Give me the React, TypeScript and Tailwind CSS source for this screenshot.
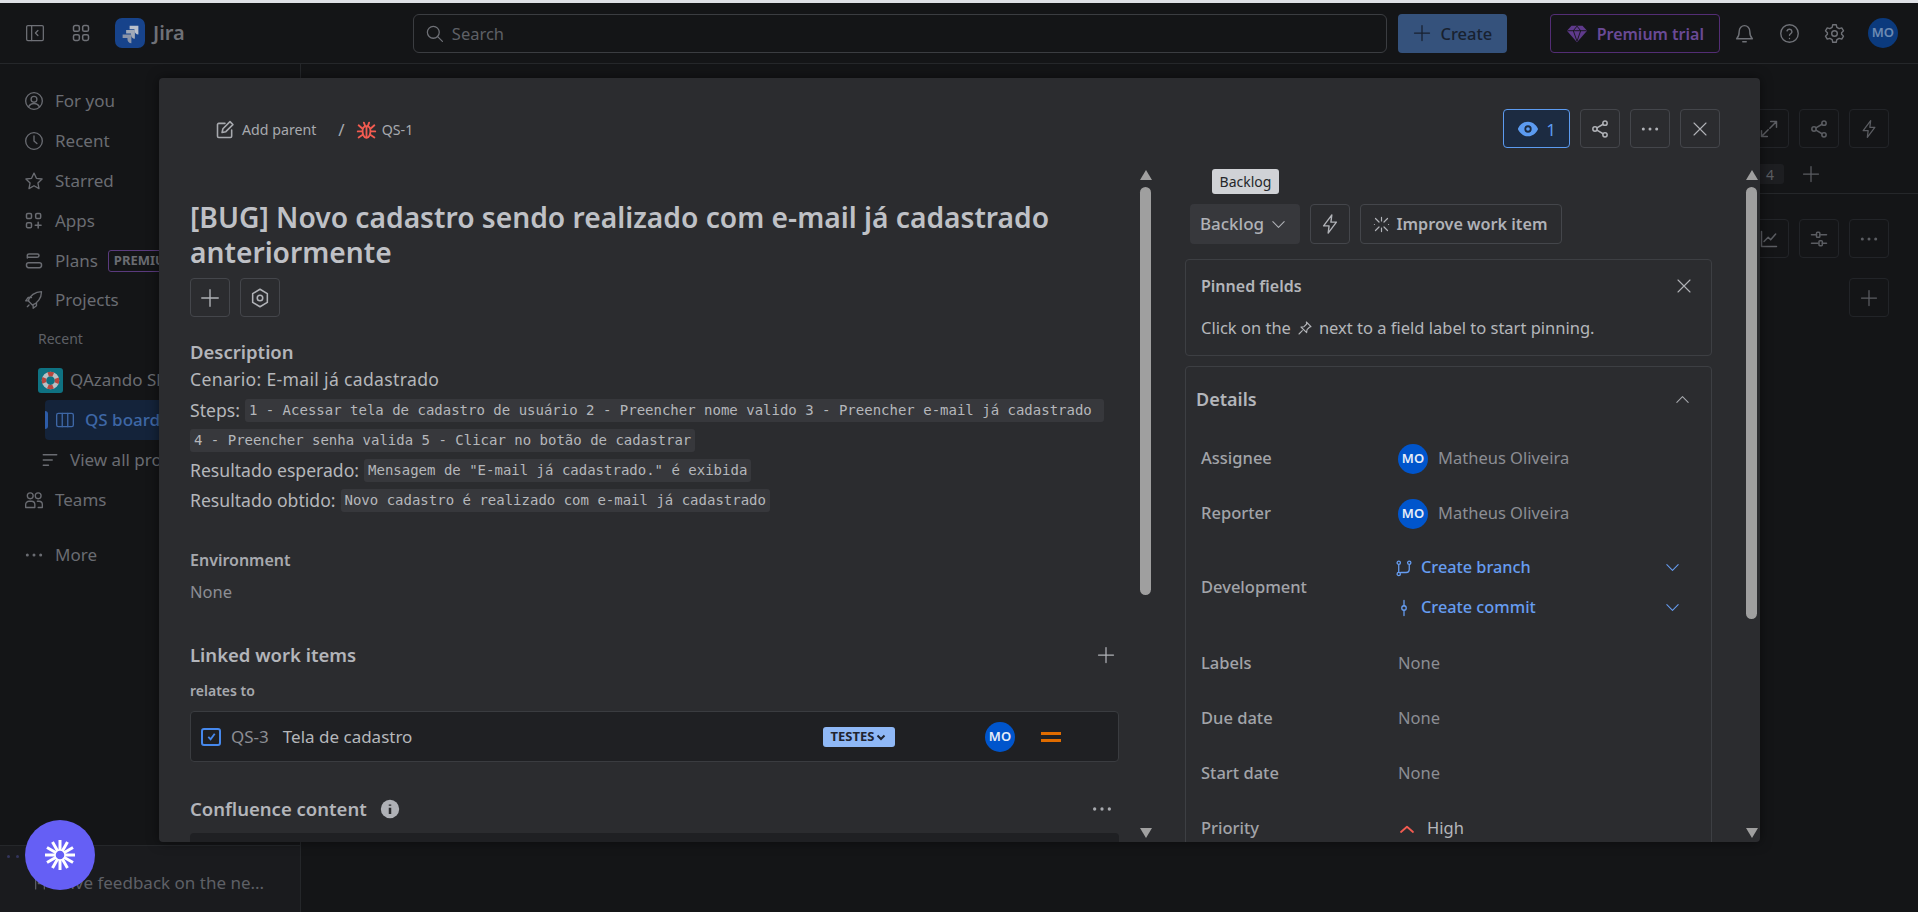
import React from "react";

type P = { className?: string };

const S = ({ children, className, vb = "0 0 24 24", sw = 1.8 }: { children: React.ReactNode; className?: string; vb?: string; sw?: number }) => (
  <svg viewBox={vb} className={className} fill="none" stroke="currentColor" strokeWidth={sw} strokeLinecap="round" strokeLinejoin="round">{children}</svg>
);

const Plus = ({ className }: P) => <S className={className} sw={1.5}><path d="M12 3v18M3 12h18" /></S>;
const Close = ({ className }: P) => <S className={className} sw={1.5}><path d="M4 4l16 16M20 4L4 20" /></S>;
const Dots = ({ className }: P) => (
  <svg viewBox="0 0 24 24" className={className} fill="currentColor"><circle cx="4" cy="12" r="1.8" /><circle cx="12" cy="12" r="1.8" /><circle cx="20" cy="12" r="1.8" /></svg>
);
const Share = ({ className }: P) => <S className={className}><circle cx="18" cy="5" r="2.6" /><circle cx="6" cy="12" r="2.6" /><circle cx="18" cy="19" r="2.6" /><path d="M8.3 10.7l7.4-4.4M8.3 13.3l7.4 4.4" /></S>;
const Bolt = ({ className }: P) => <S className={className} sw={1.5}><path d="M14 2L5 14h6l-1 8 9-12h-6z" /></S>;
const Down = ({ className }: P) => <S className={className} sw={1.5}><path d="M4 8l8 8 8-8" /></S>;

const Row = ({ icon, label, extra }: { icon: React.ReactNode; label: string; extra?: React.ReactNode }) => (
  <div className="flex h-10 items-center pl-[24px] text-[#6a6c72]">
    <span className="mr-[11px] flex h-5 w-5 items-center justify-center">{icon}</span>
    <span className="text-[17px] whitespace-nowrap">{label}</span>
    {extra}
  </div>
);

const Code = ({ children }: { children: React.ReactNode }) => (
  <code className="h-[23px] rounded-[3px] bg-[#37383c] px-1 text-[14px] leading-[23px] whitespace-pre text-[#b5b7bb] [font-family:'DejaVu_Sans_Mono',monospace]">{children}</code>
);

const IconBtn = ({ children, className = "" }: { children: React.ReactNode; className?: string }) => (
  <div className={`flex h-[39px] w-[40px] shrink-0 items-center justify-center rounded-[4px] border border-[#44464b] text-[#b0b2b7] ${className}`}>{children}</div>
);

const DimBtn = ({ children, className = "" }: { children: React.ReactNode; className?: string }) => (
  <div className={`flex h-[39px] w-[40px] shrink-0 items-center justify-center rounded-[4px] border border-[#222428] text-[#5b5d62] ${className}`}>{children}</div>
);

const Avatar = () => (
  <div className="flex h-[30px] w-[30px] shrink-0 items-center justify-center rounded-full bg-[#0055cc] text-[13px] font-semibold text-[#e6edf8]">MO</div>
);

const Field = ({ label, children }: { label: string; children: React.ReactNode }) => (
  <div className="flex h-[55px] items-center pl-[15px]">
    <div className="w-[197px] text-[16.5px] font-medium text-[#a2a4a9]">{label}</div>
    {children}
  </div>
);

const Scroll = ({ h }: { h: string }) => (
  <div className="flex h-full w-[11px] shrink-0 flex-col items-center pb-[4px]">
    <div className="h-0 w-0 border-x-[6px] border-b-[10px] border-x-transparent border-b-[#a0a0a0]" />
    <div className={`mt-[7px] w-[11px] rounded-full bg-[#9f9f9f] ${h}`} />
    <div className="mt-auto h-0 w-0 border-x-[6px] border-t-[10px] border-x-transparent border-t-[#a0a0a0]" />
  </div>
);

const spokes = [0, 30, 60, 90, 120, 150, 180, 210, 240, 270, 300, 330];

export default function App() {
  return (
    <div className="relative h-screen w-full overflow-hidden bg-[#141517] [font-family:'Noto_Sans',sans-serif]">
      <div className="h-[3px] bg-[#dfe1e6]" />
      <header className="flex h-[61px] items-center border-b border-[#25272a] bg-[#141517]">
        <S className="ml-[25px] h-[20px] w-[20px] text-[#6f7177]" sw={1.5}>
          <rect x="2" y="3" width="20" height="18" rx="1.5" /><path d="M8 3v18M15.500 9l-3 3 3 3" />
        </S>
        <S className="ml-[26px] h-[20px] w-[20px] text-[#6f7177]" sw={1.8}>
          <rect x="3" y="3" width="7" height="7" rx="2" /><rect x="14" y="3" width="7" height="7" rx="2" /><rect x="3" y="14" width="7" height="7" rx="2" /><rect x="14" y="14" width="7" height="7" rx="2" />
        </S>
        <div className="ml-[24px] flex h-[30px] w-[30px] items-center justify-center rounded-[7px] bg-[#17438b]">
          <svg viewBox="0 0 24 24" className="h-[21px] w-[21px]">
            <path d="M11 3h10v10c-2.600 0-4.500-1.900-4.500-4.500V7H11z" fill="#b9c0cc" />
            <path d="M7 8h10v10c-2.600 0-4.500-1.900-4.500-4.500V12H7z" fill="#a0a9b8" />
            <path d="M3 13h10v10c-2.600 0-4.500-1.900-4.500-4.500V17H3z" fill="#8a94a8" />
          </svg>
        </div>
        <span className="ml-[8px] text-[20px] font-semibold text-[#6f7177]">Jira</span>
        <div className="ml-[228px] flex h-[39px] w-[974px] items-center rounded-[6px] border border-[#3b3d41] pl-[11px]">
          <S className="h-[19px] w-[19px] text-[#6f7177]" sw={1.6}><circle cx="10.500" cy="10.500" r="7.500" /><path d="M16 16l6 6" /></S>
          <span className="ml-[8px] pt-[2px] text-[16.5px] text-[#5e6066]">Search</span>
        </div>
        <div className="ml-[11px] flex h-[39px] w-[109px] items-center justify-center rounded-[4px] bg-[#35527c] text-[#18212f]">
          <Plus className="mr-[8px] h-[20px] w-[20px]" />
          <span className="pt-[2px] text-[16.5px] font-medium">Create</span>
        </div>
        <div className="ml-[43px] flex h-[39px] w-[170px] items-center justify-center rounded-[4px] border border-[#532d75] text-[#6a4a96]">
          <svg viewBox="0 0 24 24" className="mr-[9px] h-[22px] w-[22px]" fill="#5f3a8c" strokeLinejoin="round"><path d="M6 4h12l5 5.500L12 22 1 9.500z" /><path d="M1.500 9.500h21M8 9.500L12 21l4-11.500M8 9.500L12 4.500l4 5" fill="none" stroke="#141517" strokeWidth="1" /></svg>
          <span className="pt-px text-[16px] font-semibold">Premium trial</span>
        </div>
        <S className="ml-[14px] h-[21px] w-[21px] text-[#6f7177]" sw={1.6}><path d="M18 9a6 6 0 10-12 0c0 6-2 8-3 9h18c-1-1-3-3-3-9zM10 21.500h4" /></S>
        <S className="ml-[24px] h-[21px] w-[21px] text-[#6f7177]" sw={1.6}><circle cx="12" cy="12" r="10" /><path d="M9.200 9a2.900 2.900 0 015.600 1c0 2-2.800 2.400-2.800 4M12 17.600v.1" /></S>
        <S className="ml-[24px] h-[21px] w-[21px] text-[#6f7177]" sw={1.6}><circle cx="12" cy="12" r="3.200" /><path d="M10 2h4l.7 3 2.600 1.500 3-.9 2 3.400-2.200 2.200v1.600l2.200 2.200-2 3.400-3-.9-2.600 1.500-.7 3h-4l-.7-3-2.600-1.500-3 .9-2-3.400 2.200-2.200v-1.600L1.700 9l2-3.400 3 .9L9.300 5z" /></S>
        <div className="ml-[23px] flex h-[30px] w-[30px] items-center justify-center rounded-full bg-[#0b3a7d] text-[13px] font-semibold text-[#6d8bb3]">MO</div>
      </header>

      <div className="flex h-[848px]">
        <aside className="flex w-[301px] shrink-0 flex-col border-r border-[#25272a]">
          <div className="flex-1 pt-[17px]">
            <Row label="For you" icon={<S className="h-5 w-5" sw={1.6}><circle cx="12" cy="12" r="10" /><circle cx="12" cy="10" r="3.500" /><path d="M5.500 19c1.500-3 4-4 6.500-4s5 1 6.500 4" /></S>} />
            <Row label="Recent" icon={<S className="h-5 w-5" sw={1.6}><circle cx="12" cy="12" r="10" /><path d="M12 6v6l3.500 3" /></S>} />
            <Row label="Starred" icon={<S className="h-5 w-5" sw={1.6}><path d="M12 2.500l2.900 6.300 6.800.8-5 4.700 1.300 6.800-6-3.400-6 3.400 1.300-6.800-5-4.700 6.800-.8z" /></S>} />
            <Row label="Apps" icon={<S className="h-5 w-5" sw={1.8}><rect x="3" y="3" width="6" height="6" rx="1.500" /><rect x="14" y="3" width="6" height="6" rx="1.500" /><rect x="3" y="14" width="6" height="6" rx="1.500" /><path d="M17 13.500v7M13.500 17h7" /></S>} />
            <Row label="Plans" icon={<S className="h-5 w-5" sw={1.8}><path d="M4 8.500V5.500A2 2 0 016 3.500h10a2 2 0 012 2v0a2 2 0 01-2 2H4" /><rect x="3" y="14" width="18" height="6" rx="2.500" /></S>} extra={<span className="ml-[10px] flex h-[22px] items-center rounded-[3px] border border-[#5a3a7d] px-[5px] text-[13px] font-bold text-[#6a6c72]">PREMIUM</span>} />
            <div className="-mt-px">
              <Row label="Projects" icon={<S className="h-5 w-5" sw={1.6}><path d="M8 16l-3-3c2-6 8-11 16-11 0 8-5 14-11 16zM6 13H2l3-4h4M11 18v4l4-3v-4M4 20l2-2" /></S>} />
            </div>
            <div className="flex h-[39px] items-center pb-[2px] pl-[38px] text-[14px] text-[#5e6066]">Recent</div>
            <div className="mt-px flex h-10 items-center pl-[38px] text-[17px] text-[#6a6c72]">
              <div className="mr-[7px] flex h-[25px] w-[25px] items-center justify-center rounded-[3px] bg-[#0f7282]">
                <svg viewBox="0 0 24 24" className="h-[21px] w-[21px]" fill="none">
                  <circle cx="12" cy="12" r="7.500" stroke="#b9c0c4" strokeWidth="5" />
                  <circle cx="12" cy="12" r="7.500" stroke="#b7473f" strokeWidth="5" strokeDasharray="6 5.800" strokeDashoffset="3" />
                </svg>
              </div>
              <span className="whitespace-nowrap">QAzando Shop</span>
            </div>
            <div className="ml-[45px] flex h-10 items-center rounded-[4px] bg-[#14233a] text-[#3e67a6]">
              <div className="h-[18px] w-[3px] rounded-r-sm bg-[#2d5ca8]" />
              <S className="ml-[7px] mr-[10px] h-5 w-5" sw={1.6}><rect x="2" y="4" width="20" height="16" rx="2" /><path d="M8.700 4v16M15.300 4v16" /></S>
              <span className="text-[17px] font-medium whitespace-nowrap">QS board</span>
            </div>
            <div className="flex h-10 items-center pl-[41px] text-[17px] text-[#6a6c72]">
              <S className="mr-[11px] h-[18px] w-[18px]" sw={1.8}><path d="M3 5h18M3 12h12M3 19h7" /></S>
              <span className="whitespace-nowrap">View all projects</span>
            </div>
            <Row label="Teams" icon={<S className="h-5 w-5" sw={1.6}><circle cx="7.500" cy="7" r="3.500" /><circle cx="17" cy="7" r="3.500" /><path d="M2 21v-3.500a4 4 0 014-4h3a4 4 0 014 4V21zM16 13.500h2a4 4 0 014 4V21h-5" /></S>} />
            <div className="mt-[15px]">
              <Row label="More" icon={<Dots className="h-5 w-5" />} />
            </div>
          </div>
          <div className="flex h-[67px] shrink-0 flex-col border-t border-[#25272a] bg-[#1a1b1e] pl-[7px]">
            <div className="mt-[9px] flex gap-[6px]">
              <span className="h-[3px] w-[3px] rounded-full bg-[#33355c]" />
              <span className="h-[3px] w-[3px] rounded-full bg-[#33355c]" />
            </div>
            <div className="mt-[12px] flex items-center text-[17px] text-[#5e6066]">
              <S className="ml-[24px] mr-[11px] h-[16px] w-[16px]" sw={1.8}><path d="M7 21V8a2 2 0 014 0v5h6a3 3 0 013 3v5" /></S>
              <span className="whitespace-nowrap">Give feedback on the ne...</span>
            </div>
          </div>
        </aside>
        <main className="flex flex-1 flex-col items-end pr-[29px] pt-[45px]">
          <div className="flex gap-[10px]">
            <DimBtn><S className="h-5 w-5"><path d="M14 3h7v7M21 3l-8 8M10 21H3v-7M3 21l8-8" /></S></DimBtn>
            <DimBtn><Share className="h-5 w-5" /></DimBtn>
            <DimBtn><Bolt className="h-5 w-5" /></DimBtn>
          </div>
          <div className="mt-[11px] flex h-[30px] w-full items-center justify-end pr-[68px] text-[#5b5d62]">
            <div className="mr-[17px] flex h-[20px] w-[28px] items-center justify-end rounded-[3px] bg-[#1d1e21] pr-[10px] text-[14px]">4</div>
            <Plus className="h-5 w-5" />
          </div>
          <div className="-mr-[29px] mt-[4px] h-px w-[calc(100%+29px)] bg-[#25272a]" />
          <div className="mt-[25px] flex gap-[10px]">
            <DimBtn><S className="h-5 w-5"><path d="M3 3v18h18M6 15l5-5 3 3 6-7" /></S></DimBtn>
            <DimBtn><S className="h-5 w-5"><path d="M3 7h6M14 7h7M3 17h8M16 17h5" /><rect x="9" y="4" width="4" height="6" rx="1" /><rect x="12" y="14" width="4" height="6" rx="1" /></S></DimBtn>
            <DimBtn><Dots className="h-5 w-5" /></DimBtn>
          </div>
          <DimBtn className="mt-[20px]"><Plus className="h-5 w-5" /></DimBtn>
        </main>
      </div>

      <div className="absolute left-[159px] top-[78px] flex h-[764px] w-[1601px] flex-col overflow-hidden rounded-[4px] bg-[#2b2c2f] shadow-[0_0_12px_rgba(0,0,0,0.5)]">
        <div className="flex h-[70px] shrink-0 items-end pl-[56px] pr-[40px]">
          <div className="flex h-[36px] flex-1 items-center self-end text-[14.2px] text-[#a7a9ae]">
            <S className="mr-[7px] h-[20px] w-[20px]" sw={1.9}><path d="M12 4H4.500A1.500 1.500 0 003 5.500v14A1.500 1.500 0 004.500 21h14a1.500 1.500 0 001.500-1.500V12" /><path d="M18 2l3.500 3.500L13 14l-4.500 1 1-4.500z" /></S>
            <span>Add parent</span>
            <span className="ml-[22px] mr-[11px] text-[17px]">/</span>
            <S className="mr-[5px] h-[21px] w-[21px] text-[#f15b50]" sw={2.100}><path d="M12 7c3 0 4.500 2 4.500 5.500S15 20.500 12 20.500 7.500 16 7.500 12.500 9 7 12 7zM12 7v13.500M9 3l1.500 4M15 3l-1.500 4M3 6l4.500 4M21 6l-4.500 4M2 13h5.500M22 13h-5.500M3 20l5-3.500M21 20l-5-3.500" /></S>
            <span>QS-1</span>
          </div>
          <div className="flex gap-[10px]">
            <div className="flex h-[39px] w-[67px] items-center justify-center rounded-[4px] border border-[#5c9bf0] bg-[#1c2b41] text-[#5c9bf0]">
              <svg viewBox="0 0 24 24" className="mr-[7px] h-[22px] w-[22px]" fill="currentColor" fillRule="evenodd"><path d="M12 4c6 0 10 5 11 8-1 3-5 8-11 8S2 15 1 12c1-3 5-8 11-8zm0 4a4 4 0 100 8 4 4 0 000-8zm0 2a2 2 0 110 4 2 2 0 010-4z" /></svg>
              <span className="pt-[2px] text-[17px]">1</span>
            </div>
            <IconBtn><Share className="h-5 w-5" /></IconBtn>
            <IconBtn><Dots className="h-5 w-5" /></IconBtn>
            <IconBtn><Close className="h-[18px] w-[18px]" /></IconBtn>
          </div>
        </div>

        <div className="mt-[22px] flex min-h-0 flex-1">
          <div className="ml-[31px] w-[929px] shrink-0 overflow-hidden">
            <h1 className="mt-[30px] text-[28.2px] font-semibold leading-[35px] text-[#bfc1c6]">[BUG] Novo cadastro sendo realizado com e-mail já cadastrado anteriormente</h1>
            <div className="mt-[8px] flex gap-[10px]">
              <IconBtn><Plus className="h-[22px] w-[22px]" /></IconBtn>
              <IconBtn>
                <S className="h-[22px] w-[22px]" sw={1.7}><path d="M12 2.500l8 4.700v9.600l-8 4.700-8-4.700V7.200z" /><circle cx="12" cy="12" r="3" /></S>
              </IconBtn>
            </div>
            <h2 className="mt-[23px] h-[24px] text-[18.5px] font-semibold leading-[24px] text-[#b3b5ba]">Description</h2>
            <div className="mb-px flex h-[30px] items-center text-[17.6px] tracking-[0.32px] text-[#b5b7bb]">Cenario: E-mail já cadastrado</div>
            <div className="flex h-[30px] items-center gap-[5px] text-[17.6px] text-[#b5b7bb]">Steps: <Code>1 - Acessar tela de cadastro de usuário 2 - Preencher nome valido 3 - Preencher e-mail já cadastrado </Code></div>
            <div className="flex h-[30px] items-center"><Code>4 - Preencher senha valida 5 - Clicar no botão de cadastrar</Code></div>
            <div className="flex h-[30px] items-center gap-[5px] text-[17.6px] text-[#b5b7bb]">Resultado esperado: <Code>Mensagem de "E-mail já cadastrado." é exibida</Code></div>
            <div className="flex h-[30px] items-center gap-[5px] text-[17.6px] text-[#b5b7bb]">Resultado obtido: <Code>Novo cadastro é realizado com e-mail já cadastrado</Code></div>
            <h3 className="mt-[33px] h-[24px] text-[16px] font-semibold leading-[24px] text-[#a7a9ae]">Environment</h3>
            <div className="mt-[8px] h-[24px] text-[16.5px] leading-[24px] text-[#8c8e94]">None</div>
            <div className="mt-[37px] flex h-[28px] items-center justify-between pr-[3px]">
              <h2 className="text-[18.5px] font-semibold text-[#b3b5ba]">Linked work items</h2>
              <Plus className="h-[20px] w-[20px] text-[#b0b2b7]" />
            </div>
            <div className="mt-[12px] h-[20px] text-[14px] font-semibold leading-[20px] text-[#a7a9ae]">relates to</div>
            <div className="mt-[10px] flex h-[51px] items-center rounded-[4px] border border-[#3a3c40] bg-[#1f2023] pl-[10px]">
              <div className="flex w-[622px] items-center">
                <div className="flex h-[18px] w-[20px] items-center justify-center rounded-[3px] border-2 border-[#4688ec]">
                  <svg viewBox="0 0 24 24" className="h-[11px] w-[11px]" fill="none" stroke="#4688ec" strokeWidth="4"><path d="M5 13l5 5 9-12" /></svg>
                </div>
                <span className="ml-[10px] text-[17px] text-[#8c8e94]">QS-3</span>
                <span className="ml-[14px] text-[17px] text-[#b5b7bb]">Tela de cadastro</span>
              </div>
              <div className="flex h-[20px] w-[72px] items-center justify-center rounded-[3px] bg-[#8fb8f6] text-[13px] font-bold text-[#1f2430]">
                TESTES
                <svg viewBox="0 0 24 24" className="ml-px h-[12px] w-[12px]" fill="none" stroke="currentColor" strokeWidth="4"><path d="M5 9l7 7 7-7" /></svg>
              </div>
              <div className="ml-[90px]"><Avatar /></div>
              <svg viewBox="0 0 20 10" className="ml-[26px] h-[10px] w-[20px]" fill="#e06c00"><rect y="0" width="20" height="3" /><rect y="7" width="20" height="3" /></svg>
            </div>
            <div className="mt-[33px] flex h-[28px] items-center justify-between pr-[6px]">
              <div className="flex items-center">
                <h2 className="text-[18.5px] font-semibold text-[#b3b5ba]">Confluence content</h2>
                <svg viewBox="0 0 24 24" className="ml-[13px] h-[20px] w-[20px]"><circle cx="12" cy="12" r="11" fill="#afb1b6" /><path d="M12 6.500v1.500M12 10.500v7.500" stroke="#2b2c2f" strokeWidth="3" /></svg>
              </div>
              <Dots className="h-[22px] w-[22px] text-[#a7a9ae]" />
            </div>
            <div className="mt-[10px] h-[40px] rounded-t-[4px] bg-[#1f2023]" />
          </div>
          <div className="ml-[21px]"><Scroll h="h-[408px]" /></div>

          <div className="relative ml-[34px] w-[527px] shrink-0">
            <div className="absolute left-[27px] top-[-1px] flex h-[25px] w-[67px] items-center justify-center rounded-[3px] bg-[#d0d2d6] text-[14px] text-[#25272a]">Backlog</div>
            <div className="mt-[34px] flex h-[40px] gap-[10px] pl-[5px]">
              <div className="flex w-[110px] items-center justify-center rounded-[4px] bg-[#37383c] pr-[3px] text-[17px] font-medium text-[#b0b2b7]">
                Backlog
                <Down className="ml-[6px] h-[17px] w-[17px]" />
              </div>
              <IconBtn className="h-[40px]! w-[40px]"><Bolt className="h-[22px] w-[22px]" /></IconBtn>
              <div className="flex w-[202px] items-center justify-center rounded-[4px] border border-[#44464b] pr-[2px] text-[16.2px] font-semibold text-[#b0b2b7]">
                <S className="mr-[7px] h-[17px] w-[17px]" sw={1.7}><path d="M12 2v5M12 17v5M2 12h0M22 12h0M3.500 3.500l5 5M20.500 3.500l-5 5M3.500 20.500l5-5M20.500 20.500l-5-5" /></S>
                Improve work item
              </div>
            </div>
            <div className="mt-[15px] h-[97px] rounded-[4px] border border-[#3d3f43] pl-[15px] pr-[18px] pt-[12px]">
              <div className="flex h-[28px] items-center justify-between">
                <span className="text-[16px] font-semibold text-[#b3b5ba]">Pinned fields</span>
                <Close className="h-[18px] w-[18px] text-[#b0b2b7]" />
              </div>
              <div className="mt-[16px] flex items-center text-[16.5px] text-[#b5b7bb]">
                Click on the
                <S className="mx-[6px] h-[16px] w-[16px]" sw={1.6}><path d="M14 3l7 7-2 .5-4 4-.5 4.500-8.500-8.500 4.500-.5 4-4zM8 16l-5 5" /></S>
                next to a field label to start pinning.
              </div>
            </div>
            <div className="mt-[10px] h-[500px] rounded-t-[4px] border border-[#3d3f43]">
              <div className="mt-[18px] flex h-[28px] items-center justify-between pl-[10px] pr-[20px]">
                <span className="text-[18px] font-semibold text-[#b3b5ba]">Details</span>
                <S className="h-[17px] w-[17px] text-[#a7a9ae]" sw={1.5}><path d="M4 16l8-8 8 8" /></S>
              </div>
              <div className="mt-[18px]">
                <Field label="Assignee"><Avatar /><span className="ml-[10px] text-[16.5px] text-[#8c8e94]">Matheus Oliveira</span></Field>
                <Field label="Reporter"><Avatar /><span className="ml-[10px] text-[16.5px] text-[#8c8e94]">Matheus Oliveira</span></Field>
                <div className="-mt-px flex h-[95px] items-center pl-[15px]">
                  <div className="w-[194px] text-[16.5px] font-medium text-[#a2a4a9]">Development</div>
                  <div className="w-[286px] text-[16.3px] font-medium text-[#669df1]">
                    <div className="flex h-[40px] items-center">
                      <S className="mr-[8px] h-[18px] w-[18px]" sw={1.7}><circle cx="5" cy="5" r="2.200" /><circle cx="19" cy="5" r="2.200" /><circle cx="5" cy="20" r="2.200" /><path d="M5 7.500v10M19 7.500v6.500a4 4 0 01-4 4H7.500" /></S>
                      <span className="flex-1">Create branch</span>
                      <Down className="h-[17px] w-[17px]" />
                    </div>
                    <div className="flex h-[40px] items-center">
                      <S className="mr-[8px] h-[18px] w-[18px]" sw={1.7}><circle cx="12" cy="12" r="3" /><path d="M12 2v7M12 15v7" /></S>
                      <span className="flex-1">Create commit</span>
                      <Down className="h-[17px] w-[17px]" />
                    </div>
                  </div>
                </div>
                <div className="mt-px">
                  <Field label="Labels"><span className="text-[16.5px] text-[#8c8e94]">None</span></Field>
                  <Field label="Due date"><span className="text-[16.5px] text-[#8c8e94]">None</span></Field>
                  <Field label="Start date"><span className="text-[16.5px] text-[#8c8e94]">None</span></Field>
                  <Field label="Priority">
                    <S className="mr-[11px] h-[18px] w-[18px] text-[#f15b50]" sw={2.400}><path d="M4 16l8-7 8 7" /></S>
                    <span className="text-[16.5px] text-[#b5b7bb]">High</span>
                  </Field>
                </div>
              </div>
            </div>
          </div>
          <div className="ml-[34px]"><Scroll h="h-[432px]" /></div>
        </div>
      </div>

      <div className="absolute left-[25px] top-[820px] flex h-[70px] w-[70px] items-center justify-center rounded-full bg-[#655ff5]">
        <svg viewBox="0 0 32 32" className="h-[32px] w-[32px]" stroke="#fff" strokeWidth="3" fill="none">
          {spokes.map((a) => (
            <line key={a} x1={16 + 5 * Math.cos((a * Math.PI) / 180)} y1={16 + 5 * Math.sin((a * Math.PI) / 180)} x2={16 + 15 * Math.cos((a * Math.PI) / 180)} y2={16 + 15 * Math.sin((a * Math.PI) / 180)} />
          ))}
          <circle cx="16" cy="16" r="5" strokeWidth="1.500" />
        </svg>
      </div>
    </div>
  );
}
